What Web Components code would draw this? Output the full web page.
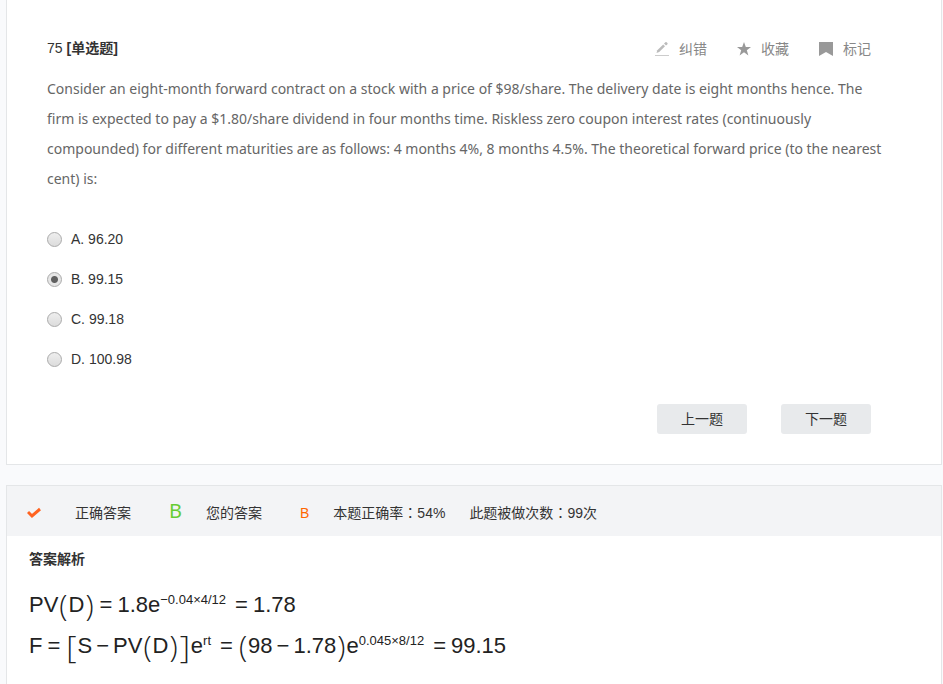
<!DOCTYPE html>
<html lang="zh-CN">
<head>
<meta charset="utf-8">
<title>75 单选题</title>
<style>
  body {
    margin: 0;
    padding: 0 1px 0 6px;
    background: #f9fafc;
    color: #333;
    font: 14px/20px "Liberation Sans", "Noto Sans CJK SC", sans-serif;
  }
</style>
</head>
<body>
<quiz-page></quiz-page>

<script>
  class BaseElement extends HTMLElement {
    render(html) {
      this.attachShadow({ mode: 'open' }).innerHTML = html;
    }
  }

  const icons = {
    pencil: '<path d="M1.5 11 2.3 8.3 8.2 2.4 10 4.2 4.2 10.1z" fill="#bbb"/><path d="M9 1.6 10.4.3q.6-.5 1.2 0l.8.8q.5.6 0 1.2L11 3.6z" fill="#bbb"/><path d="M0 13.5h14" stroke="#ccc"/>',
    star: '<path d="M7 0 8.8 5H14L9.8 8.2 11.4 13.5 7 10.3 2.6 13.5 4.2 8.2 0 5h5.2z" fill="#999"/>',
    flag: '<path d="M0 0h14v14L7 10 0 14z" fill="#999"/>',
  };

  customElements.define('tool-button', class extends BaseElement {
    connectedCallback() {
      this.render(`
        <style>
          :host { display: block; }
          button {
            display: flex;
            align-items: center;
            gap: 10px;
            padding: 2px 0 0;
            border: 0;
            background: none;
            color: #888;
            font: inherit;
            cursor: pointer;
          }
          svg { display: block; width: 14px; height: 14px; }
        </style>
        <button type="button">
          <svg viewBox="0 0 14 14" aria-hidden="true">${icons[this.getAttribute('icon')]}</svg>
          <span><slot></slot></span>
        </button>
      `);
    }
  });

  customElements.define('nav-button', class extends BaseElement {
    connectedCallback() {
      this.render(`
        <style>
          :host { display: block; }
          button {
            min-width: 90px;
            height: 30px;
            padding: 0 24px;
            border: 0;
            border-radius: 3px;
            background: #e8eaec;
            color: #333;
            font: inherit;
            cursor: pointer;
          }
          button:hover { background: #dfe2e5; }
        </style>
        <button type="button"><slot></slot></button>
      `);
    }
  });

  customElements.define('choice-list', class extends BaseElement {
    connectedCallback() {
      const selected = this.getAttribute('selected');
      const rows = this.getAttribute('choices').split('|').map((text) => `
        <label>
          <input type="radio" name="answer" value="${text[0]}" ${text[0] === selected ? 'checked' : ''}>
          <span>${text}</span>
        </label>
      `).join('');
      this.render(`
        <style>
          :host { display: block; }
          label {
            display: flex;
            align-items: center;
            gap: 9px;
            width: fit-content;
            height: 40px;
          }
          input {
            appearance: none;
            width: 15px;
            height: 15px;
            margin: 0;
            border: 1px solid #aaa;
            border-radius: 50%;
            background: linear-gradient(#eee, #dcdcdc);
          }
          input:checked {
            background: radial-gradient(circle, #606060 3px, #e6e6e6 4px);
          }
        </style>
        ${rows}
      `);
    }
  });

  customElements.define('question-card', class extends BaseElement {
    connectedCallback() {
      this.render(`
        <style>
          :host {
            display: block;
            padding: 37px 40px 30px;
            border: 1px solid #e4e6e8;
            border-top: 0;
            background: #fff;
          }
          header, footer {
            display: flex;
            align-items: center;
            padding-right: 30px;
          }
          header { justify-content: space-between; }
          h1 {
            margin: 0;
            font-size: 14px;
            font-weight: normal;
          }
          .tools { display: flex; gap: 30px; }
          .body {
            margin: 15px 0 25px;
            padding-right: 12px;
            color: #666;
            font-family: "Noto Sans", "Open Sans", sans-serif;
            line-height: 30px;
          }
          footer {
            justify-content: flex-end;
            gap: 34px;
            padding-top: 25px;
          }
        </style>
        <header>
          <h1><slot name="title"></slot></h1>
          <div class="tools"><slot name="tools"></slot></div>
        </header>
        <div class="body"><slot></slot></div>
        <slot name="choices"></slot>
        <footer><slot name="nav"></slot></footer>
      `);
    }
  });

  customElements.define('answer-bar', class extends BaseElement {
    connectedCallback() {
      this.render(`
        <style>
          :host {
            display: flex;
            align-items: center;
            height: 50px;
            padding: 4px 20px 0;
            box-sizing: border-box;
            background: #f3f4f6;
            font-family: "Liberation Sans", "Noto Sans CJK SC", sans-serif;
          }
          svg { width: 14px; height: 12px; margin-right: 34px; }
          .right {
            margin: 0 24px 4px 38px;
            color: #6c3;
            font: 20px/20px "Noto Sans", sans-serif;
          }
          .yours { margin: 0 24px 0 38px; color: #f60; }
          .count { margin-left: 24px; }
          /* the TC face centres the full-width colon */
          i { font-family: "Noto Sans CJK TC", sans-serif; font-style: normal; line-height: 1; }
        </style>
        <svg viewBox="0 0 14 12" aria-hidden="true">
          <path d="M1 5 5 9 13 2" fill="none" stroke="#ff6320" stroke-width="3"/>
        </svg>
        <span>正确答案</span>
        <span class="right">${this.getAttribute('correct')}</span>
        <span>您的答案</span>
        <span class="yours">${this.getAttribute('yours')}</span>
        <span>本题正确率<i lang="zh-TW">：</i>${this.getAttribute('rate')}</span>
        <span class="count">此题被做次数<i lang="zh-TW">：</i>${this.getAttribute('count')}次</span>
      `);
    }
  });

  customElements.define('price-formula', class extends BaseElement {
    connectedCallback() {
      this.render(`
        <style>
          :host {
            display: block;
            color: #222;
            font-size: 22px;
          }
          .row {
            display: flex;
            align-items: center;
            height: 41px;
            white-space: nowrap;
          }
          .op { margin: 0 5px; }
          .minus { margin: 0 4px; }
          .paren, .square {
            font-family: "Open Sans", sans-serif;
            font-weight: 300;
          }
          .paren { font-size: 30px; margin: 0 1px; }
          .square { font-size: 32px; margin: 0 1px; }
          .exp {
            align-self: flex-start;
            margin-top: 6px;
            margin-right: 4px;
            font-size: 13px;
            line-height: 20px;
          }
        </style>
        <div class="row">
          <span>PV</span><span class="paren">(</span><span>D</span><span class="paren">)</span>
          <span class="op">=</span><span>1.8e</span><span class="exp">−0.04×4/12</span>
          <span class="op">=</span><span>1.78</span>
        </div>
        <div class="row">
          <span>F</span><span class="op">=</span><span class="square">[</span><span>S</span>
          <span class="minus">−</span><span>PV</span><span class="paren">(</span><span>D</span><span class="paren">)</span><span class="square">]</span>
          <span>e</span><span class="exp">rt</span><span class="op">=</span>
          <span class="paren">(</span><span>98</span><span class="minus">−</span><span>1.78</span><span class="paren">)</span>
          <span>e</span><span class="exp">0.045×8/12</span>
          <span class="op">=</span><span>99.15</span>
        </div>
      `);
    }
  });

  customElements.define('answer-card', class extends BaseElement {
    connectedCallback() {
      this.render(`
        <style>
          :host {
            display: block;
            margin-top: 20px;
            border: 1px solid #e4e6e8;
            border-bottom: 0;
            background: #fff;
          }
          section { padding: 13px 22px 18px; }
          h2 {
            margin: 0 0 15px;
            font-size: 14px;
            line-height: 20px;
          }
        </style>
        <slot name="bar"></slot>
        <section>
          <h2>答案解析</h2>
          <slot></slot>
        </section>
      `);
    }
  });

  customElements.define('quiz-page', class extends BaseElement {
    connectedCallback() {
      this.render(`
        <style>
          :host { display: block; }
        </style>
        <question-card>
          <span slot="title">75 <b>[单选题]</b></span>
          <tool-button slot="tools" icon="pencil">纠错</tool-button>
          <tool-button slot="tools" icon="star">收藏</tool-button>
          <tool-button slot="tools" icon="flag">标记</tool-button>
          Consider an eight-month forward contract on a stock with a price of $98/share. The delivery date is eight months hence. The firm is expected to pay a $1.80/share dividend in four months time. Riskless zero coupon interest rates (continuously compounded) for different maturities are as follows: 4 months 4%, 8 months 4.5%. The theoretical forward price (to the nearest cent) is:
          <choice-list slot="choices" selected="B" choices="A. 96.20|B. 99.15|C. 99.18|D. 100.98"></choice-list>
          <nav-button slot="nav">上一题</nav-button>
          <nav-button slot="nav">下一题</nav-button>
        </question-card>
        <answer-card>
          <answer-bar slot="bar" correct="B" yours="B" rate="54%" count="99"></answer-bar>
          <price-formula></price-formula>
        </answer-card>
      `);
    }
  });
</script>
</body>
</html>
